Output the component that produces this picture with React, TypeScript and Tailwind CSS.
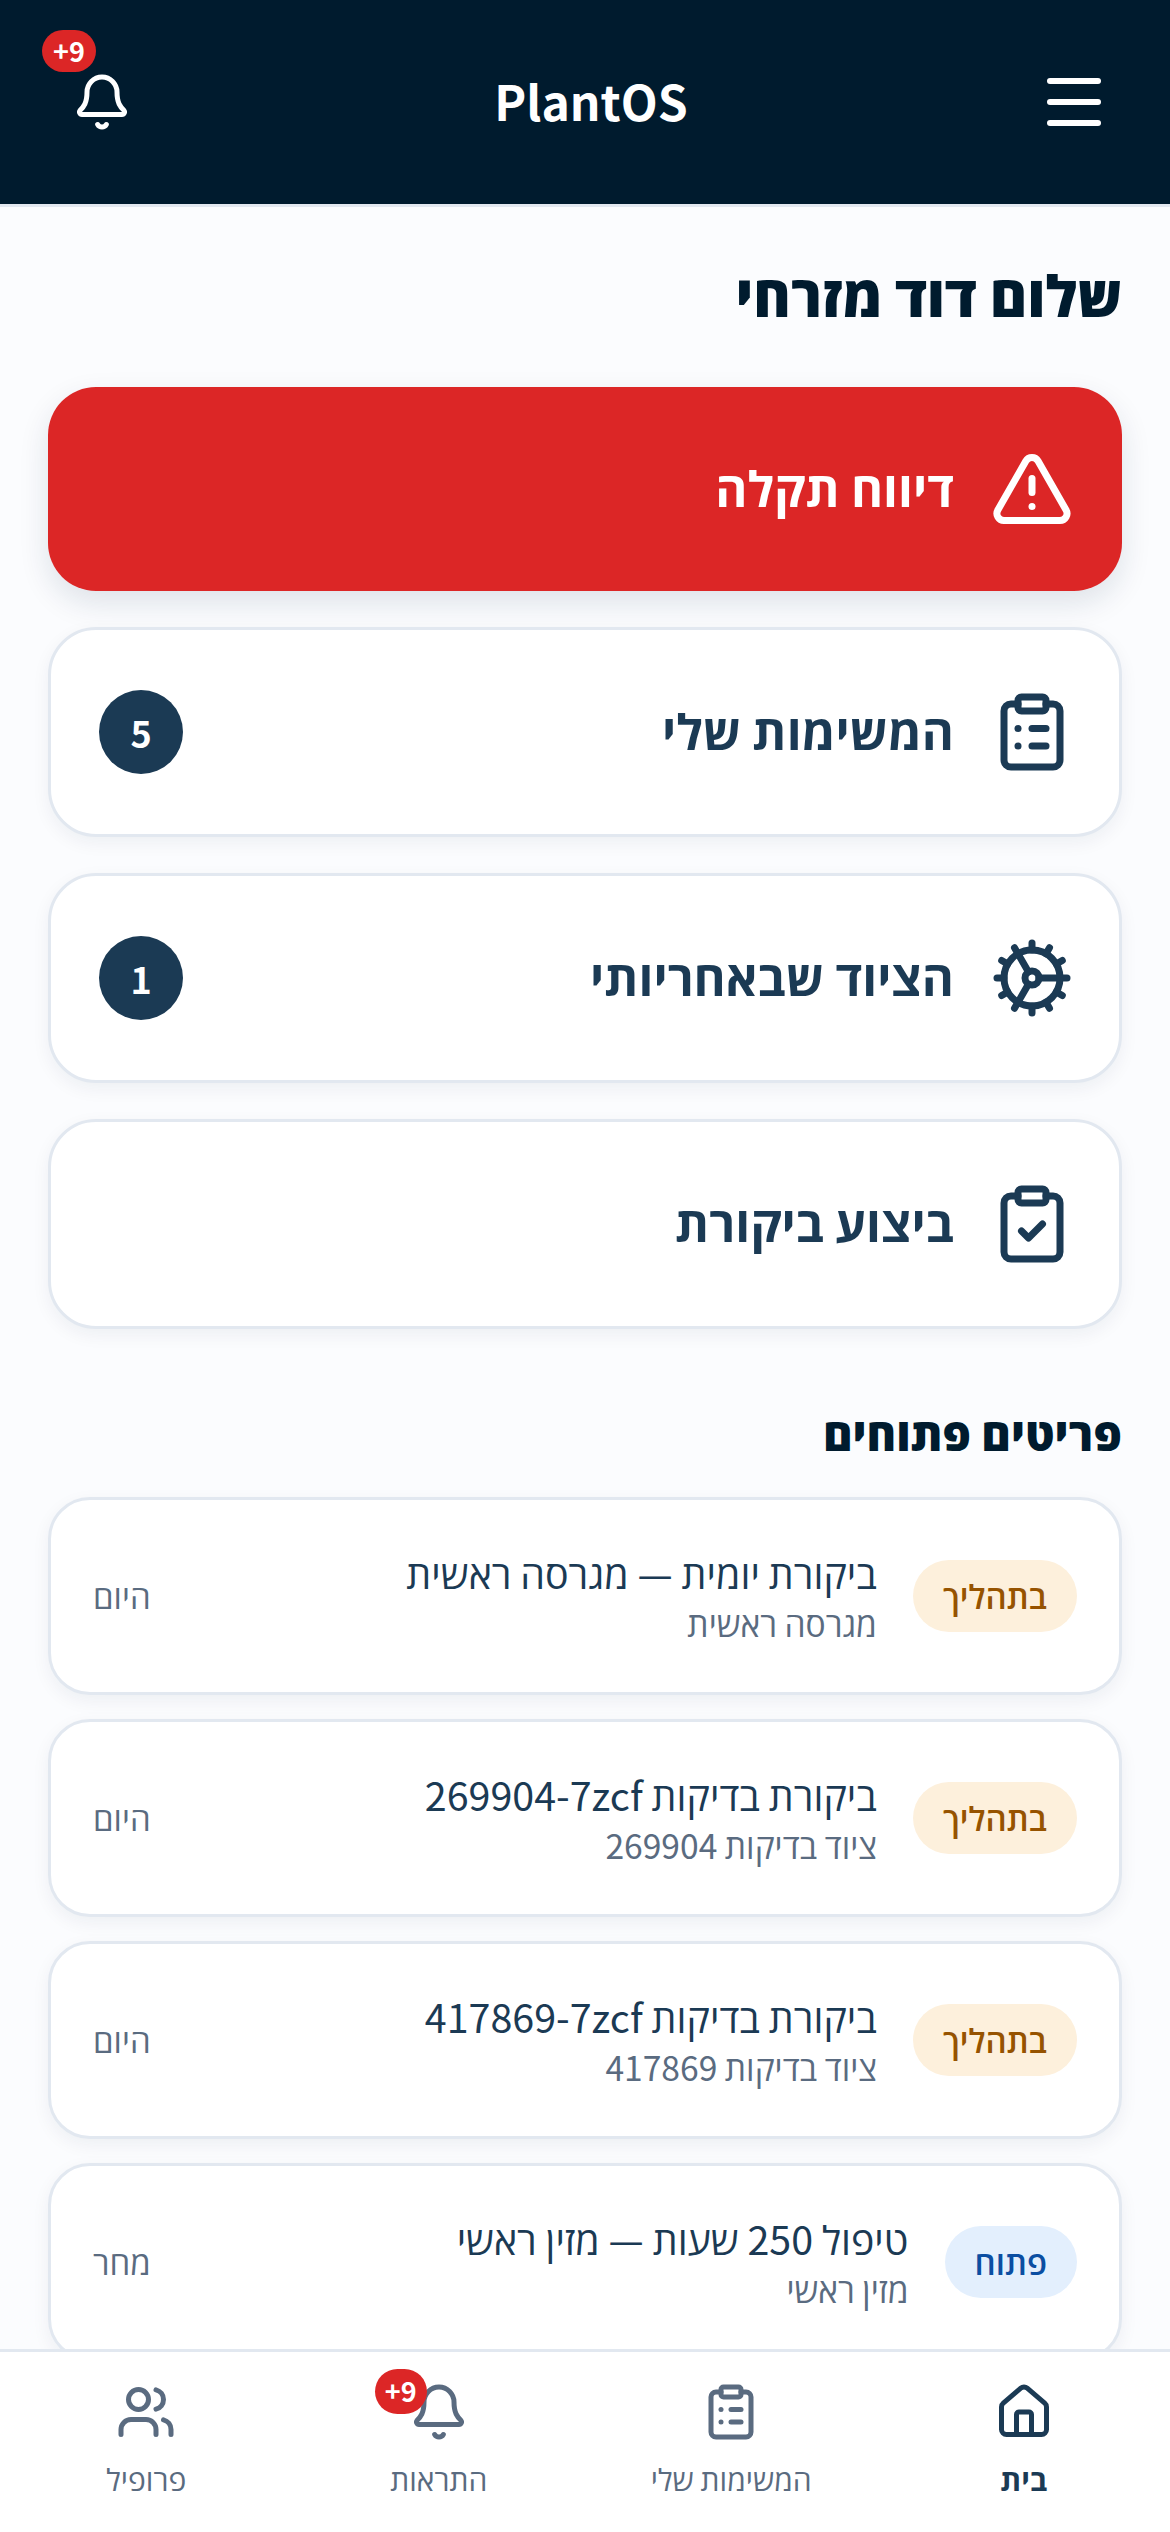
import { Bell, ClipboardList, ClipboardCheck, Cog, House, Menu, TriangleAlert, Users } from "lucide-react";

const rows = [
  { pill: "בתהליך", open: false, title: "ביקורת יומית — מגרסה ראשית", sub: "מגרסה ראשית", date: "היום" },
  { pill: "בתהליך", open: false, title: "ביקורת בדיקות 269904-7zcf", sub: "ציוד בדיקות 269904", date: "היום" },
  { pill: "בתהליך", open: false, title: "ביקורת בדיקות 417869-7zcf", sub: "ציוד בדיקות 417869", date: "היום" },
  { pill: "פתוח", open: true, title: "טיפול 250 שעות — מזין ראשי", sub: "מזין ראשי", date: "מחר" },
];

function ActionCard({ icon, label, count }: { icon: React.ReactNode; label: string; count?: number }) {
  return (
    <div className="flex h-[210px] items-center gap-[36px] rounded-[48px] border-[3px] border-[#e2e8f0] bg-white pr-[45px] pl-[48px] shadow-[0_6px_18px_rgba(15,40,70,0.06)]">
      {icon}
      <span className="mt-[-6px] flex-1 text-[49px] font-bold text-[#1b3a54]">{label}</span>
      {count !== undefined && (
        <span className="flex h-[84px] w-[84px] items-center justify-center rounded-full bg-[#1b3a54] text-[36px] font-bold text-white">
          {count}
        </span>
      )}
    </div>
  );
}

function NavItem({ icon, label, active }: { icon: React.ReactNode; label: string; active?: boolean }) {
  return (
    <div className={`flex flex-col items-center gap-[12px] ${active ? "text-[#1b3a54]" : "text-[#5a6b80]"}`}>
      {icon}
      <span className={`text-[30px] leading-[48px] ${active ? "font-bold" : "font-normal"}`}>{label}</span>
    </div>
  );
}

export default function App() {
  return (
    <div dir="rtl" className="relative h-[2532px] w-[1170px] overflow-hidden bg-[#fbfcfe] font-['Noto_Sans_CJK_SC','Open_Sans',sans-serif]">
      <header className="flex h-[207px] items-start justify-between border-b-[3px] border-[#e2e8f0] bg-[#001b2e] pt-[66px] pr-[60px] pl-[66px]">
        <Menu size={72} strokeWidth={2} className="text-white" />
        <span className="mt-[-2px] mr-[-6px] text-[48px] leading-[72px] font-bold text-white" dir="ltr">PlantOS</span>
        <div className="relative h-[72px] w-[72px]">
          <Bell size={60} strokeWidth={2} className="absolute top-[6px] left-[6px] text-white" />
          <span className="absolute top-[-36px] left-[-24px] flex h-[42px] w-[54px] items-center justify-center rounded-full bg-[#dc2626] text-[27px] font-bold text-white" dir="ltr">+9</span>
        </div>
      </header>

      <main className="px-[48px] pt-[43px]">
        <h1 className="mb-[53px] text-[57px] leading-[84px] font-extrabold text-[#001b2e]">שלום דוד מזרחי</h1>

        <div className="flex h-[204px] items-center gap-[36px] rounded-[48px] bg-[#dc2626] pr-[48px] shadow-[0_12px_30px_rgba(15,40,70,0.12)]">
          <TriangleAlert size={84} strokeWidth={2} className="text-white" />
          <span className="mt-[-7px] text-[49px] font-bold text-white">דיווח תקלה</span>
        </div>

        <div className="mt-[36px] flex flex-col gap-[36px]">
          <ActionCard icon={<ClipboardList size={84} strokeWidth={2} className="text-[#1b3a54]" />} label="המשימות שלי" count={5} />
          <ActionCard icon={<Cog size={84} strokeWidth={2} className="text-[#1b3a54]" />} label="הציוד שבאחריותי" count={1} />
          <ActionCard icon={<ClipboardCheck size={84} strokeWidth={2} className="text-[#1b3a54]" />} label="ביצוע ביקורת" />
        </div>

        <h2 className="mt-[70px] mb-[32px] text-[45px] leading-[66px] font-extrabold text-[#001b2e]">פריטים פתוחים</h2>

        <div className="flex flex-col gap-[24px]">
          {rows.map((r) => (
            <div key={r.title} className="flex h-[198px] flex-none items-center gap-[36px] rounded-[42px] border-[3px] border-[#e2e8f0] bg-white px-[42px] shadow-[0_6px_18px_rgba(15,40,70,0.06)]">
              <span className={`flex h-[72px] items-center rounded-full px-[30px] text-[33px] font-semibold ${r.open ? "bg-[#e3effd] text-[#0b4ea2]" : "bg-[#fdf0dc] text-[#965300]"}`}>
                {r.pill}
              </span>
              <div className="flex-1">
                <div className="text-[39.4px] leading-[54px] text-[#1b3a54]">{r.title}</div>
                <div className="text-[33.6px] leading-[48px] text-[#5a6b80]">{r.sub}</div>
              </div>
              <span className="text-[33px] text-[#5a6b80]">{r.date}</span>
            </div>
          ))}
        </div>
      </main>

      <nav className="absolute right-0 bottom-0 left-0 grid h-[183px] grid-cols-4 border-t-[3px] border-[#e2e8f0] bg-white pt-[30px]">
        <NavItem icon={<House size={60} strokeWidth={2} />} label="בית" active />
        <NavItem icon={<ClipboardList size={60} strokeWidth={2} />} label="המשימות שלי" />
        <NavItem
          icon={
            <div className="relative h-[60px] w-[60px]">
              <Bell size={60} strokeWidth={2} />
              <span className="absolute top-[-13px] left-[-34px] flex h-[45px] w-[52px] items-center justify-center rounded-full bg-[#dc2626] text-[27px] font-bold text-white" dir="ltr">+9</span>
            </div>
          }
          label="התראות"
        />
        <NavItem icon={<Users size={60} strokeWidth={2} />} label="פרופיל" />
      </nav>
    </div>
  );
}
